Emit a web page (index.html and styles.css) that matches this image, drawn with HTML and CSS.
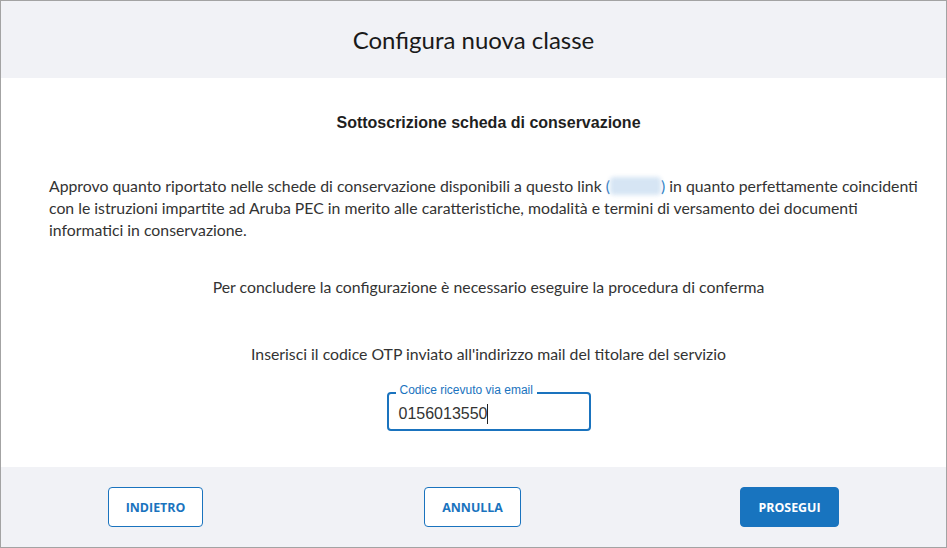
FILE: index.html
```html
<!DOCTYPE html>
<html lang="it">
<head>
  <meta charset="UTF-8">
  <title>Configura nuova classe</title>
  <link rel="stylesheet" href="styles.css">
</head>
<body>
  <div class="dialog">
    <div class="dialog-header">
      <h1>Configura nuova classe</h1>
    </div>

    <div class="dialog-body">
      <h2>Sottoscrizione scheda di conservazione</h2>
      <p class="terms">
        Approvo quanto riportato nelle schede di conservazione disponibili a questo link
        <a class="terms-link">(<span class="blurred"></span>)</a> in quanto perfettamente coincidenti
        con le istruzioni impartite ad Aruba PEC in merito alle caratteristiche, modalità e termini di versamento dei documenti
        informatici in conservazione.
      </p>
      <p class="note">Per concludere la configurazione è necessario eseguire la procedura di conferma</p>
      <p class="note otp-note">Inserisci il codice OTP inviato all'indirizzo mail del titolare del servizio</p>

      <div class="otp-field">
        <label class="otp-label">Codice ricevuto via email</label>
        <span class="otp-value">0156013550</span><span class="caret"></span>
      </div>
    </div>

    <div class="dialog-footer">
      <div class="footer-col"><button class="btn">INDIETRO</button></div>
      <div class="footer-col"><button class="btn">ANNULLA</button></div>
      <div class="footer-col"><button class="btn btn-primary">PROSEGUI</button></div>
    </div>
  </div>
</body>
</html>
```

FILE: styles.css
```css
* {
  box-sizing: border-box;
}

body {
  margin: 0;
  background-color: #ffffff;
  font-family: Lato, "Liberation Sans", sans-serif;
  color: #333333;
}

.dialog {
  width: 947px;
  height: 548px;
  border: 1px solid #a3a3a3;
  display: flex;
  flex-direction: column;
}

.dialog-header {
  height: 77px;
  background-color: #f1f2f6;
  display: flex;
  align-items: center;
  justify-content: center;
}

.dialog-header h1 {
  margin: 0;
  font-size: 24px;
  font-weight: 400;
  color: #1a1a1a;
}

.dialog-body {
  flex: 1;
  padding: 36px 18px 0 48px;
  display: flex;
  flex-direction: column;
  align-items: center;
}

.dialog-body h2 {
  margin: 0;
  font-family: "Liberation Sans", Arial, sans-serif;
  font-size: 16px;
  line-height: 18px;
  font-weight: bold;
  color: #1f1f1f;
}

.terms {
  align-self: stretch;
  margin: 43px -6px 0 0;
  font-size: 15.8px;
  line-height: 22px;
}

.terms-link {
  color: #1a73be;
}

.blurred {
  display: inline-block;
  width: 51px;
  height: 18px;
  vertical-align: -3px;
  background-color: #d6e5f4;
  filter: blur(2px);
  border-radius: 4px;
}

.note {
  margin: 35px 0 0;
  font-size: 15.8px;
  line-height: 22px;
}

.otp-note {
  margin-top: 45px;
}

.otp-field {
  position: relative;
  margin-top: 27px;
  width: 204px;
  height: 39px;
  padding: 0 10px;
  border: 2px solid #1a73be;
  border-radius: 4px;
  display: flex;
  align-items: center;
}

.otp-label {
  position: absolute;
  top: -11px;
  left: 7px;
  padding: 0 4px;
  background-color: #ffffff;
  font-family: "Liberation Sans", Arial, sans-serif;
  font-size: 12px;
  line-height: 14px;
  color: #1a73be;
}

.otp-value {
  font-family: "Liberation Sans", Arial, sans-serif;
  font-size: 16px;
  color: #333333;
  margin-top: 4px;
}

.caret {
  width: 1px;
  height: 20px;
  margin-top: 4px;
  background-color: #222222;
}

.dialog-footer {
  height: 80px;
  padding-right: 2px;
  background-color: #f1f2f6;
  display: grid;
  grid-template-columns: repeat(3, 317px);
  justify-content: center;
  align-items: center;
}

.footer-col {
  display: flex;
  justify-content: center;
}

.btn {
  height: 40px;
  padding: 0 17px;
  border: 1px solid #1a73be;
  border-radius: 4px;
  background-color: #ffffff;
  color: #1a73be;
  font-family: "Open Sans", sans-serif;
  font-size: 12.4px;
  font-weight: bold;
}

.btn-primary {
  background-color: #1874bf;
  color: #ffffff;
}
```
